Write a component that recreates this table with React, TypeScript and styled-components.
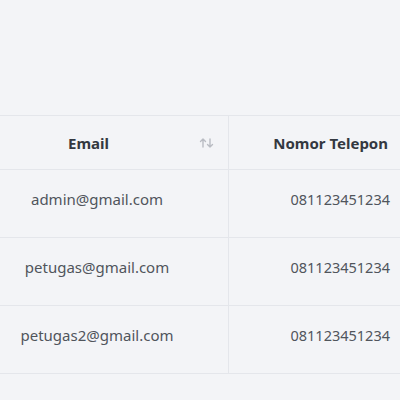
import React from "react";
import styled, { createGlobalStyle } from "styled-components";

const GlobalStyle = createGlobalStyle`
  html, body {
    margin: 0;
    padding: 0;
    background: #f3f4f7;
    font-family: "Noto Sans", "Open Sans", sans-serif;
  }
`;

const users = [
  { email: "admin@gmail.com", phone: "081123451234" },
  { email: "petugas@gmail.com", phone: "081123451234" },
  { email: "petugas2@gmail.com", phone: "081123451234" },
];

const SortIcon = () => (
  <svg width="16" height="10" viewBox="0 0 16 10" fill="none">
    <path d="M4 9V1M1.5 3.5L4 1l2.5 2.5" stroke="#b9bcc3" strokeWidth="1.4" strokeLinecap="round" strokeLinejoin="round" />
    <path d="M11 1v8M8.5 6.5L11 9l2.5-2.5" stroke="#b9bcc3" strokeWidth="1.4" strokeLinecap="round" strokeLinejoin="round" />
  </svg>
);

const App = () => {
  return (
    <>
      <GlobalStyle />
      <Page>
        <Table>
          <HeadCell>
            <HeadLabel>Email</HeadLabel>
            <SortIcon />
          </HeadCell>
          <HeadCell $right>
            <HeadLabel $right>Nomor Telepon</HeadLabel>
          </HeadCell>
          {users.map((u) => (
            <React.Fragment key={u.email}>
              <Cell>{u.email}</Cell>
              <Cell $right>{u.phone}</Cell>
            </React.Fragment>
          ))}
        </Table>
      </Page>
    </>
  );
};

export default App;

const Page = styled.div`
  width: 400px;
  height: 400px;
  overflow: hidden;
  padding-top: 115px;
  box-sizing: border-box;
`;

const Table = styled.div`
  display: grid;
  grid-template-columns: 228px 1fr;
  grid-template-rows: 54px repeat(3, 68px);
  border-top: 1px solid #e4e6eb;
`;

const HeadCell = styled.div<{ $right?: boolean }>`
  display: flex;
  align-items: center;
  padding: 0 ${(p) => (p.$right ? "12px" : "13px")} 0 0;
  border-bottom: 1px solid #e4e6eb;
  border-left: ${(p) => (p.$right ? "1px solid #e4e6eb" : "none")};
`;

const HeadLabel = styled.span<{ $right?: boolean }>`
  flex: 1;
  text-align: ${(p) => (p.$right ? "right" : "center")};
  padding-right: ${(p) => (p.$right ? "0" : "22px")};
  font-size: 15px;
  font-weight: 700;
  color: #333840;
`;

const Cell = styled.div<{ $right?: boolean }>`
  display: flex;
  align-items: center;
  justify-content: ${(p) => (p.$right ? "flex-end" : "center")};
  padding: 0 ${(p) => (p.$right ? "10px" : "34px")} 10px 0;
  font-size: ${(p) => (p.$right ? "14.5px" : "15px")};
  color: #50555c;
  border-bottom: 1px solid #e4e6eb;
  border-left: ${(p) => (p.$right ? "1px solid #e4e6eb" : "none")};
`;
